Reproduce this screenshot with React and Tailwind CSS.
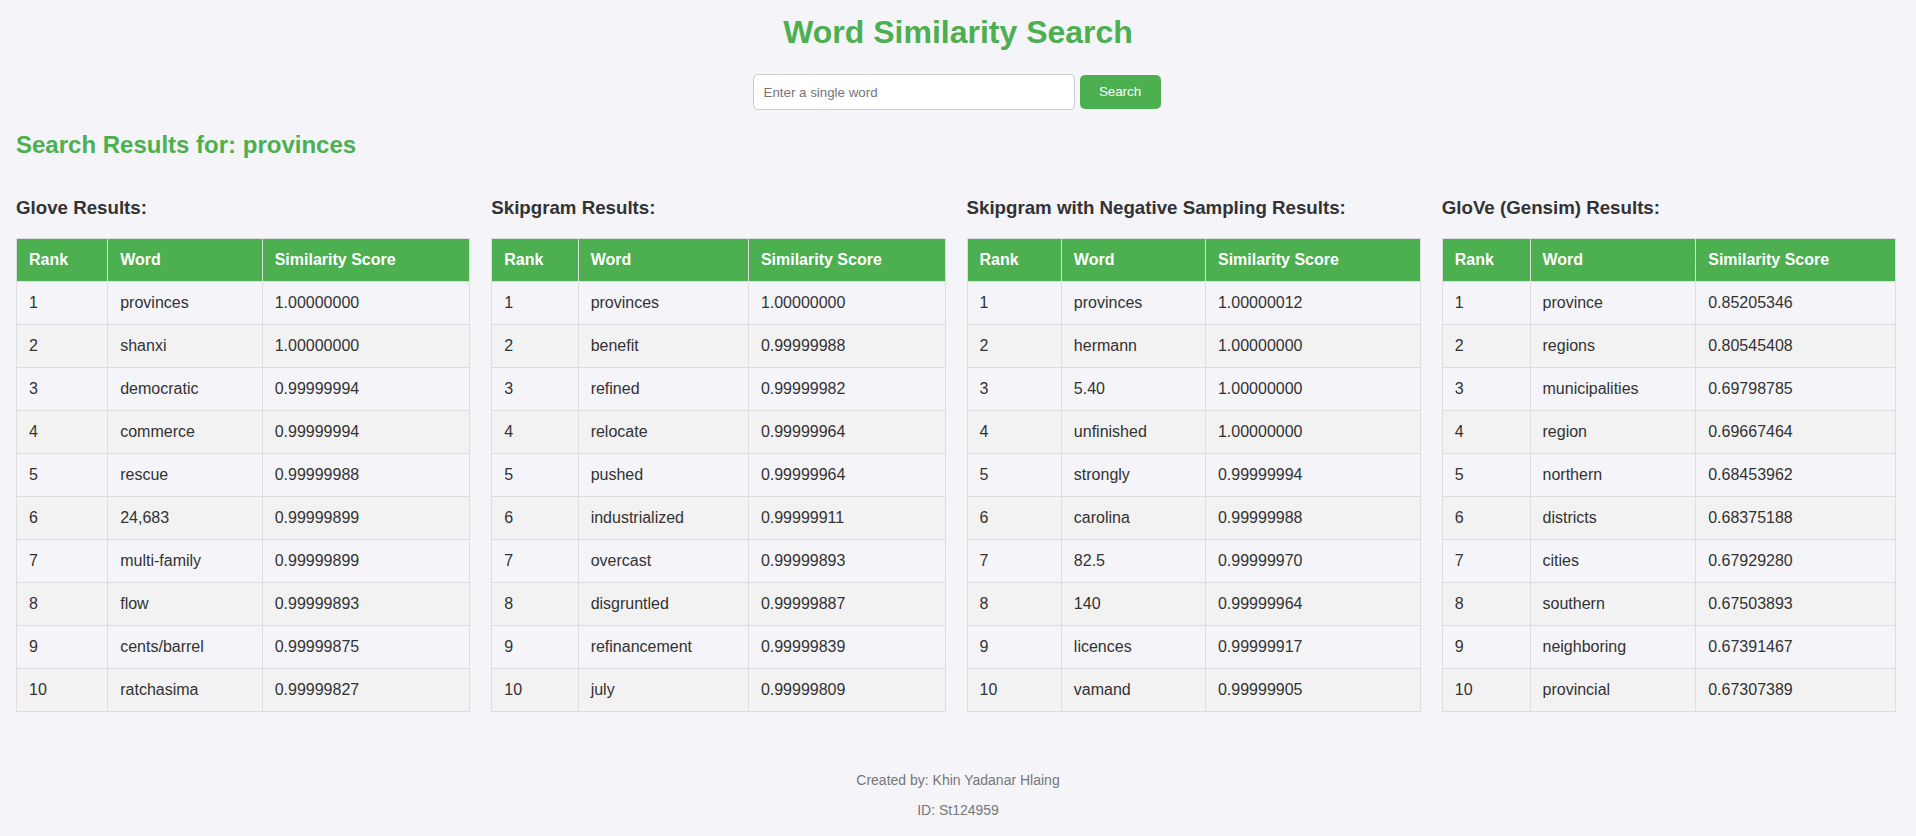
import React from "react";

const data = [
  {
    title: "Glove Results:",
    rows: [
      ["provinces", "1.00000000"],
      ["shanxi", "1.00000000"],
      ["democratic", "0.99999994"],
      ["commerce", "0.99999994"],
      ["rescue", "0.99999988"],
      ["24,683", "0.99999899"],
      ["multi-family", "0.99999899"],
      ["flow", "0.99999893"],
      ["cents/barrel", "0.99999875"],
      ["ratchasima", "0.99999827"],
    ],
  },
  {
    title: "Skipgram Results:",
    rows: [
      ["provinces", "1.00000000"],
      ["benefit", "0.99999988"],
      ["refined", "0.99999982"],
      ["relocate", "0.99999964"],
      ["pushed", "0.99999964"],
      ["industrialized", "0.99999911"],
      ["overcast", "0.99999893"],
      ["disgruntled", "0.99999887"],
      ["refinancement", "0.99999839"],
      ["july", "0.99999809"],
    ],
  },
  {
    title: "Skipgram with Negative Sampling Results:",
    rows: [
      ["provinces", "1.00000012"],
      ["hermann", "1.00000000"],
      ["5.40", "1.00000000"],
      ["unfinished", "1.00000000"],
      ["strongly", "0.99999994"],
      ["carolina", "0.99999988"],
      ["82.5", "0.99999970"],
      ["140", "0.99999964"],
      ["licences", "0.99999917"],
      ["vamand", "0.99999905"],
    ],
  },
  {
    title: "GloVe (Gensim) Results:",
    rows: [
      ["province", "0.85205346"],
      ["regions", "0.80545408"],
      ["municipalities", "0.69798785"],
      ["region", "0.69667464"],
      ["northern", "0.68453962"],
      ["districts", "0.68375188"],
      ["cities", "0.67929280"],
      ["southern", "0.67503893"],
      ["neighboring", "0.67391467"],
      ["provincial", "0.67307389"],
    ],
  },
];

function ResultTable({ title, rows }) {
  return (
    <div className="flex-1 min-w-0">
      <h3 className="text-[18.72px] leading-[21.5px] font-bold text-[#333]">{title}</h3>
      <table className="mt-[19px] w-full border-collapse text-[16px] leading-[18px]">
        <thead>
          <tr className="bg-[#4CAF50] text-white">
            <th className="border border-[#ddd] p-3 text-left font-bold">Rank</th>
            <th className="border border-[#ddd] p-3 text-left font-bold">Word</th>
            <th className="border border-[#ddd] p-3 text-left font-bold">Similarity Score</th>
          </tr>
        </thead>
        <tbody>
          {rows.map((r, i) => (
            <tr key={i} className={i % 2 === 1 ? "bg-[#f2f2f2]" : ""}>
              <td className="border border-[#ddd] p-3 text-left">{i + 1}</td>
              <td className="border border-[#ddd] p-3 text-left">{r[0]}</td>
              <td className="border border-[#ddd] p-3 text-left">{r[1]}</td>
            </tr>
          ))}
        </tbody>
      </table>
    </div>
  );
}

export default function App() {
  return (
    <div
      className="min-h-[836px] bg-[#f4f4f9] text-[#333] pt-[14px] pb-[20px]"
      style={{ fontFamily: '"Liberation Sans", Arial, sans-serif' }}
    >
      <h1 className="text-center text-[32px] leading-[37px] font-bold text-[#4CAF50]">
        Word Similarity Search
      </h1>
      <div className="mt-[23px] flex items-center justify-center gap-[5px] pr-[3px]">
        <input
          type="text"
          placeholder="Enter a single word"
          className="w-[322px] h-[36px] border border-[#ccc] rounded-[5px] bg-white px-[10px] text-[13.33px] text-[#333] placeholder:text-[#757575] outline-none"
        />
        <button className="w-[81px] h-[34px] rounded-[5px] bg-[#4CAF50] text-white text-[13.33px]">
          Search
        </button>
      </div>
      <h2 className="mt-[21px] pl-4 text-[24px] leading-[28px] font-bold text-[#4CAF50]">
        Search Results for: provinces
      </h2>
      <div className="mt-[38px] flex gap-[21px] pl-4 pr-[20px]">
        {data.map((d) => (
          <ResultTable key={d.title} title={d.title} rows={d.rows} />
        ))}
      </div>
      <div className="mt-[60px] text-center text-[14px] leading-[16px] text-[#777]">
        <p>Created by: Khin Yadanar Hlaing</p>
        <p className="mt-[14px]">ID: St124959</p>
      </div>
    </div>
  );
}
